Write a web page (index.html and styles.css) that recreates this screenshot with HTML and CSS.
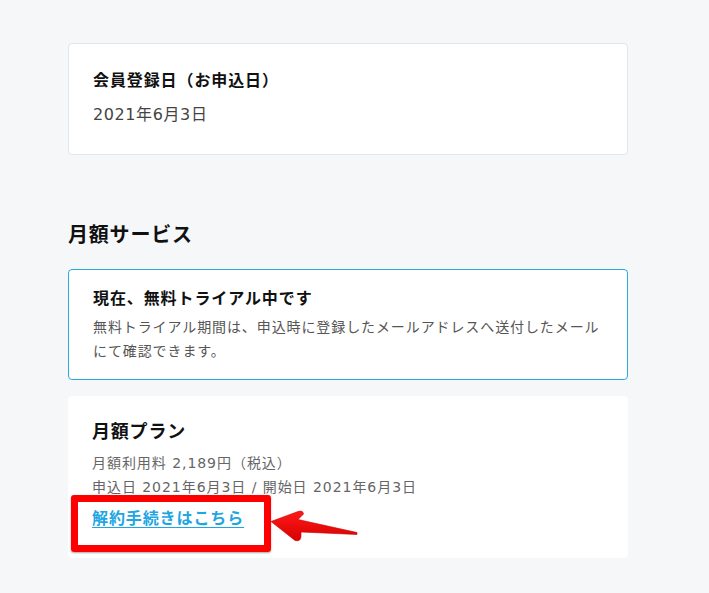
FILE: index.html
```html
<!DOCTYPE html>
<html lang="ja">
<head>
<meta charset="utf-8">
<link rel="stylesheet" href="styles.css">
</head>
<body>
<main class="page">
  <section class="card card-reg">
    <h3 class="card-title">会員登録日（お申込日）</h3>
    <p class="reg-date">2021年6月3日</p>
  </section>

  <h2 class="section-title">月額サービス</h2>

  <section class="card card-notice">
    <h3 class="card-title">現在、無料トライアル中です</h3>
    <p class="notice-text">無料トライアル期間は、申込時に登録したメールアドレスへ送付したメールにて確認できます。</p>
  </section>

  <section class="card card-plan">
    <h3 class="plan-title">月額プラン</h3>
    <p class="plan-meta">月額利用料 2,189円（税込）</p>
    <p class="plan-meta">申込日 2021年6月3日 / 開始日 2021年6月3日</p>
    <a class="cancel-link" href="#">解約手続きはこちら</a>
  </section>
</main>

<div class="highlight-box"></div>
<svg class="highlight-arrow" width="100" height="50" viewBox="0 0 100 50">
  <defs>
    <linearGradient id="ag" x1="0" y1="0" x2="0" y2="1">
      <stop offset="0" stop-color="#ff1a1a"/>
      <stop offset="1" stop-color="#d80000"/>
    </linearGradient>
  </defs>
  <path d="M1 21.5 L28 11.5 Q33 10 33.5 14 L28 19.5 L87 32.5 L87 34.5 L31 32 L31 36 Q31 42 25 40.5 Z" fill="url(#ag)" stroke="#c40000" stroke-width="0.6" stroke-linejoin="round"/>
</svg>
</body>
</html>
```

FILE: styles.css
```css
html, body {
  margin: 0;
  padding: 0;
}
body {
  background: #f6f7f9;
  font-family: "DejaVu Sans", "Noto Sans CJK JP", sans-serif;
  color: #222;
  width: 709px;
  height: 593px;
  overflow: hidden;
  position: relative;
}
.page {
  width: 560px;
  margin-left: 68px;
  padding-top: 43px;
}
.card {
  background: #fff;
  border-radius: 4px;
  box-sizing: border-box;
}
.card-reg {
  border: 1px solid #e3e5e8;
  padding: 25px 24px 25px;
  height: 112px;
}
.card-title {
  margin: 0;
  font-size: 16px;
  line-height: 24px;
  font-weight: 700;
  color: #111;
  letter-spacing: 0.9px;
}
.reg-date {
  margin: 10px 0 0;
  font-size: 16px;
  line-height: 24px;
  color: #444;
  letter-spacing: 0.6px;
}
.section-title {
  margin: 65px 0 19px;
  font-size: 20px;
  line-height: 30px;
  font-weight: 700;
  color: #111;
  letter-spacing: 0.8px;
}
.card-notice {
  border: 1px solid #29aae1;
  padding: 17px 24px 16px;
  height: 111px;
}
.notice-text {
  margin: 4px 0 0;
  font-size: 14px;
  line-height: 24px;
  color: #555;
  letter-spacing: 0.9px;
}
.card-plan {
  margin-top: 16px;
  padding: 22px 24px 26px;
  height: 162px;
}
.plan-title {
  margin: 0 0 5px;
  font-size: 18px;
  line-height: 28px;
  font-weight: 700;
  color: #111;
  letter-spacing: 0.8px;
}
.plan-meta {
  margin: 0;
  font-size: 14px;
  line-height: 24px;
  color: #666;
  letter-spacing: 0.95px;
}
.cancel-link {
  display: block;
  margin-top: 8px;
  font-size: 16px;
  line-height: 24px;
  font-weight: 700;
  color: #1ea5e3;
  letter-spacing: 0.9px;
  text-decoration: underline;
  text-underline-offset: 3px;
}
.highlight-box {
  position: absolute;
  left: 71px;
  top: 495px;
  width: 200px;
  height: 57px;
  box-sizing: border-box;
  border: 7px solid #ff0000;
  border-radius: 3px;
  box-shadow: 0 1px 2px rgba(0,0,0,0.35);
}
.highlight-arrow {
  position: absolute;
  left: 270px;
  top: 500px;
}
```
